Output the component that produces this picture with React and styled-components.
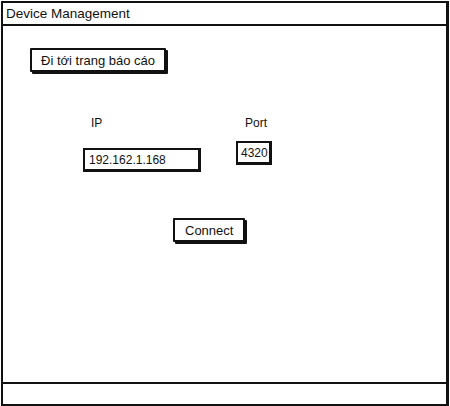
import React from 'react';
import styled, { createGlobalStyle } from 'styled-components';

const GlobalStyle = createGlobalStyle`
  body {
    margin: 0;
    background: #fff;
    font-family: "Liberation Sans", Arial, sans-serif;
    color: #111;
  }
`;

const Window = styled.div`
  box-sizing: border-box;
  width: 448px;
  height: 405px;
  margin: 1px 0 0 1px;
  border: 2px solid #111;
  border-right-width: 3px;
  display: flex;
  flex-direction: column;
`;

const TitleBar = styled.div`
  box-sizing: border-box;
  height: 23px;
  border-bottom: 2px solid #111;
  padding: 3px 0 0 3px;
  font-size: 13.5px;
`;

const Body = styled.div`
  flex: 1;
  display: flex;
  flex-direction: column;
  align-items: flex-start;
  padding: 22px 0 0 27px;
`;

const SketchButton = styled.button`
  box-sizing: border-box;
  height: 24px;
  padding: 0 ${p => p.$pad || 9}px;
  margin-left: ${p => p.$offset || 0}px;
  margin-top: ${p => p.$top || 0}px;
  border: 2px solid #111;
  border-radius: 1px;
  box-shadow: 2px 2px 0 #111;
  background: #fff;
  font-family: inherit;
  font-size: 13px;
  color: #111;
`;

const Fields = styled.div`
  display: flex;
  align-items: flex-start;
  margin: 44px 0 0 53px;
  gap: 35px;
`;

const Field = styled.div`
  display: flex;
  flex-direction: column;
  gap: ${p => p.$gap}px;
`;

const Label = styled.div`
  font-size: 12px;
  line-height: 14px;
  padding-left: ${p => p.$indent}px;
`;

const Input = styled.div`
  box-sizing: border-box;
  width: ${p => p.$width}px;
  height: 24px;
  border: 2px solid #111;
  border-right-width: 3px;
  border-bottom-width: 3px;
  padding: 3px 0 0 ${p => p.$pad || 4}px;
  font-size: 12px;
  white-space: nowrap;
`;

const Footer = styled.div`
  height: 20px;
  border-top: 2px solid #111;
`;

export default function App() {
  return (
    <>
      <GlobalStyle />
      <Window>
        <TitleBar>Device Management</TitleBar>
        <Body>
          <SketchButton>Đi tới trang báo cáo</SketchButton>
          <Fields>
            <Field $gap={18}>
              <Label $indent={8}>IP</Label>
              <Input $width={118}>192.162.1.168</Input>
            </Field>
            <Field $gap={11}>
              <Label $indent={9}>Port</Label>
              <Input $width={36} $pad={3}>4320</Input>
            </Field>
          </Fields>
          <SketchButton $offset={143} $top={46} $pad={10}>Connect</SketchButton>
        </Body>
        <Footer />
      </Window>
    </>
  );
}
